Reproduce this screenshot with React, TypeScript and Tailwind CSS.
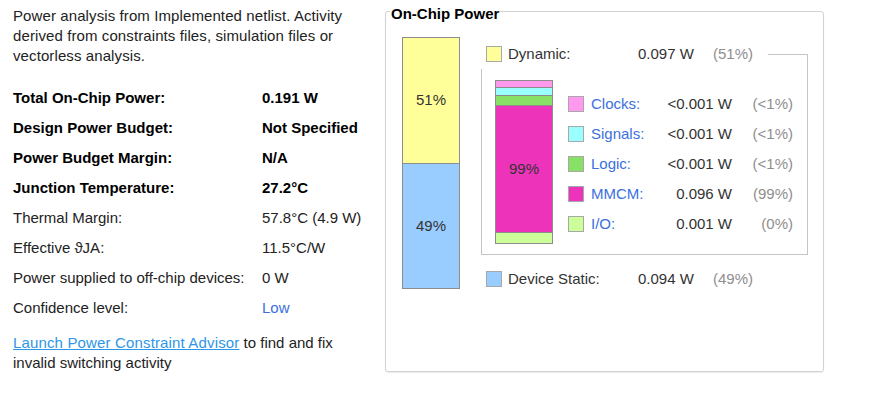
const font = { fontFamily: '"Liberation Sans", Arial, sans-serif' };

const summary: { label: string; value: string; bold?: boolean; link?: boolean }[] = [
  { label: "Total On-Chip Power:", value: "0.191 W", bold: true },
  { label: "Design Power Budget:", value: "Not Specified", bold: true },
  { label: "Power Budget Margin:", value: "N/A", bold: true },
  { label: "Junction Temperature:", value: "27.2°C", bold: true },
  { label: "Thermal Margin:", value: "57.8°C (4.9 W)" },
  { label: "Effective \u03D1JA:", value: "11.5°C/W" },
  { label: "Power supplied to off-chip devices:", value: "0 W" },
  { label: "Confidence level:", value: "Low", link: true },
];

const dynamicParts = [
  { name: "Clocks", color: "bg-[#ff99ee]", value: "<0.001 W", pct: "(<1%)" },
  { name: "Signals", color: "bg-[#99ffff]", value: "<0.001 W", pct: "(<1%)" },
  { name: "Logic", color: "bg-[#88e066]", value: "<0.001 W", pct: "(<1%)" },
  { name: "MMCM", color: "bg-[#ee33bb]", value: "0.096 W", pct: "(99%)" },
  { name: "I/O", color: "bg-[#ccff99]", value: "0.001 W", pct: "(0%)" },
];

function Swatch({ color }: { color: string }) {
  return <div className={`w-4 h-4 shrink-0 border border-[#a8a8a8] ${color}`} />;
}

export default function App() {
  return (
    <div className="flex w-[870px] h-[402px] bg-white text-[15px] text-[#222]" style={font}>
      {/* Summary */}
      <div className="w-[385px] shrink-0 pl-[13px] pt-[6px]">
        <p className="leading-[20px] w-[360px] tracking-[0.1px]">
          Power analysis from Implemented netlist. Activity derived from constraints files, simulation files or
          vectorless analysis.
        </p>
        <div className="mt-[17px]">
          {summary.map((row) => (
            <div key={row.label} className="flex items-center h-[30px]">
              <span className={`w-[249px] ${row.bold ? "font-bold text-black" : ""}`}>{row.label}</span>
              <span
                className={row.bold ? "font-bold text-black" : row.link ? "text-[#3b70e0]" : ""}
              >
                {row.value}
              </span>
            </div>
          ))}
        </div>
        <p className="mt-[10px] leading-[20px]">
          <span className="text-[#2d96e8] underline tracking-[0.15px]">Launch Power Constraint Advisor</span> to find
          and fix
          <br />
          invalid switching activity
        </p>
      </div>

      {/* On-Chip Power */}
      <fieldset className="-mt-[1px] w-[439px] h-[373px] border border-[#d2d2d2] rounded-[3px] shadow-[0_1px_1px_rgba(0,0,0,0.08)]">
        <legend className="ml-[4px] px-[1px] pt-[6px] font-bold text-black leading-[18px]">On-Chip Power</legend>
        <div className="flex items-start pl-[16px] pt-[14px]">
          {/* total bar */}
          <div className="w-[58px] h-[252px] border border-[#8c8c8c] flex flex-col text-[#333]">
            <div className="h-[126px] bg-[#ffff99] border-b border-[#8c8c8c] flex items-center justify-center">
              51%
            </div>
            <div className="flex-1 bg-[#99ccff] flex items-center justify-center">49%</div>
          </div>

          <div className="ml-[21px] mt-[9px] w-[327px]">
            {/* Dynamic */}
            <div className="flex items-center h-4 pl-[5px] text-[#333]">
              <Swatch color="bg-[#ffff99]" />
              <span className="ml-[6px] w-[130px]">Dynamic:</span>
              <span className="w-[75px]">0.097 W</span>
              <span className="w-[55px] text-[#8e8e8e]">(51%)</span>
              <div className="self-start mt-[8px] w-[40px] h-[15px] border-t border-r border-[#c4c4c4]" />
            </div>

            {/* bracket */}
            <div className="mt-[7px] border-l border-r border-b border-[#c4c4c4] pl-[13px] pt-[11px] pb-[10px] flex items-start">
              <div className="w-[58px] h-[164px] border border-[#8c8c8c] flex flex-col">
                <div className="h-[7px] bg-[#ff99ee] border-b border-[#8c8c8c]" />
                <div className="h-[8px] bg-[#99ffff] border-b border-[#8c8c8c]" />
                <div className="h-[10px] bg-[#88e066] border-b border-[#8c8c8c]" />
                <div className="h-[127px] bg-[#ee33bb] border-b border-[#8c8c8c] flex items-center justify-center text-[#333]">
                  99%
                </div>
                <div className="flex-1 bg-[#ccff99]" />
              </div>

              <div className="ml-[15px] mt-[9px]">
                {dynamicParts.map((p) => (
                  <div key={p.name} className="flex items-center h-[30px]">
                    <Swatch color={p.color} />
                    <span className="ml-[7px] w-[63px] text-[#3b70e0]">{p.name}:</span>
                    <span className="w-[78px] text-right text-[#333]">{p.value}</span>
                    <span className="w-[61px] text-right text-[#8e8e8e]">{p.pct}</span>
                  </div>
                ))}
              </div>
            </div>

            {/* Device static */}
            <div className="flex items-center h-4 pl-[5px] mt-[16px] text-[#333]">
              <Swatch color="bg-[#99ccff]" />
              <span className="ml-[6px] w-[130px]">Device Static:</span>
              <span className="w-[75px]">0.094 W</span>
              <span className="w-[55px] text-[#8e8e8e]">(49%)</span>
            </div>
          </div>
        </div>
      </fieldset>
    </div>
  );
}
